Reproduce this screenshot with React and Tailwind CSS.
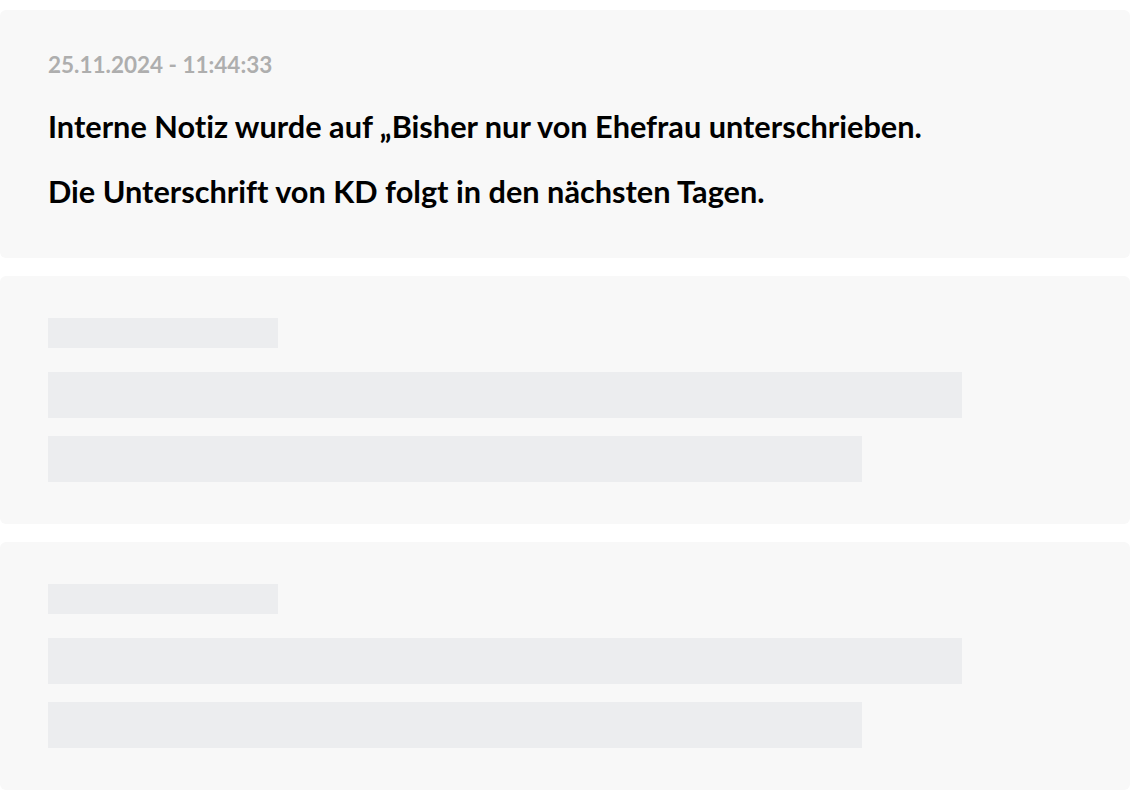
export default function App() {
  return (
    <div className="bg-white w-[1130px] min-h-[800px] pt-[10px] flex flex-col gap-[18px] [font-variant-ligatures:none]" style={{ fontFamily: 'Lato, "Noto Sans", sans-serif' }}>
      {/* Note card */}
      <div className="bg-[#f8f8f8] rounded-md h-[248px] px-12 pt-[42px]">
        <p className="text-[22.5px] leading-[26px] font-bold text-[#aeaeae]">25.11.2024 - 11:44:33</p>
        <div className="mt-[31px] text-[30.7px] font-bold text-black leading-[36px] flex flex-col gap-[29px]">
          <p>Interne Notiz wurde auf „Bisher nur von Ehefrau unterschrieben.</p>
          <p>Die Unterschrift von KD folgt in den nächsten Tagen.</p>
        </div>
      </div>

      {/* Loading placeholders */}
      {[0, 1].map((i) => (
        <div key={i} className="bg-[#f8f8f8] rounded-md h-[248px] px-12 py-[42px] flex flex-col">
          <div className="h-[30px] w-[230px] bg-[#ecedef]" />
          <div className="mt-6 h-[46px] w-[914px] bg-[#ecedef]" />
          <div className="mt-[18px] h-[46px] w-[814px] bg-[#ecedef]" />
        </div>
      ))}
    </div>
  );
}
